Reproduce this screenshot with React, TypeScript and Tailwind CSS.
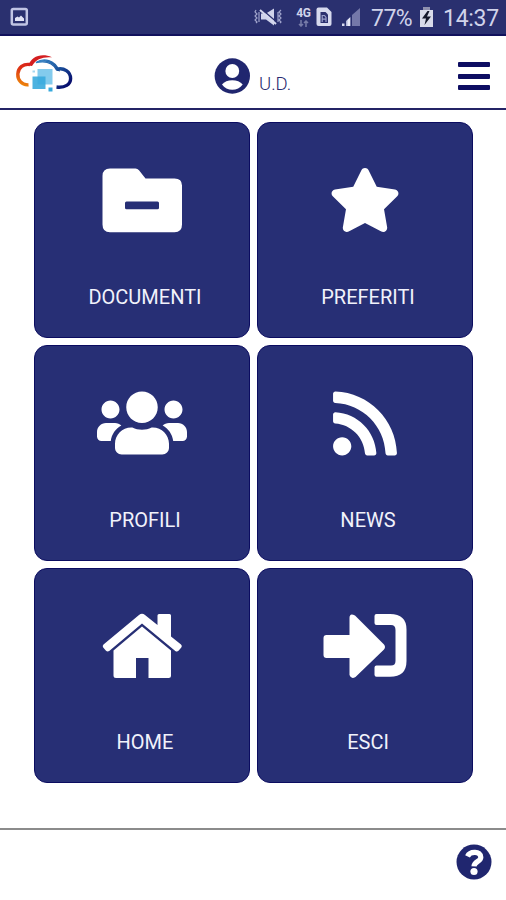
import type { ReactNode } from 'react';
import { FaRss, FaStar, FaUsers } from 'react-icons/fa';

function PictureIcon() {
  return (
    <svg className="ml-[10px] h-5 w-[19px]" viewBox="0 0 19 20" fill="none">
      <rect x="1.800" y="2" width="15" height="15.500" rx="1.500" stroke="#c0c4e4" strokeWidth="2.500" />
      <path d="M5 14v-3l2.500-1.500 1.500 1 2-2 3 3V14z" fill="#dfe1f4" />
    </svg>
  );
}

function MutedIcon() {
  return (
    <svg className="h-5 w-7" viewBox="0 0 28 20" fill="none">
      <path d="M2 3l-1 2 2 2-2 2 2 2-2 2 2 2-1 1M5 5v10M24 5v10M27 3l-2 2 2 2-2 2 2 2-2 2 2 2-1 1" stroke="#9fa3cb" strokeWidth="1.200" />
      <path d="M7 6.500h5l8-5v17l-8-6H7z" fill="#d0d3eb" />
      <path d="M7.500 2l15 13" stroke="#2b306f" strokeWidth="1.500" />
      <path d="M6 3l16 14" stroke="#d5d8ee" strokeWidth="2" />
    </svg>
  );
}

function NetworkIcon() {
  return (
    <div className="ml-[13px] flex w-[17px] flex-col items-center">
      <span className="text-[12px] leading-[11px] font-bold tracking-[-0.2px]">4G</span>
      <svg className="mt-px h-[7px] w-[11px]" viewBox="0 0 11 7" fill="none" stroke="#777ca9" strokeWidth="1.500">
        <path d="M3 0v6M1 4l2 2 2-2M8 7V1M6 3l2-2 2 2" />
      </svg>
    </div>
  );
}

function SimIcon() {
  return (
    <svg className="ml-[4px] h-5 w-4" viewBox="0 0 16 20">
      <path d="M2.500 .500h8.500l4.500 4.500v12q0 2-2 2H2.500q-2 0-2-2v-14.500q0-2 2-2z" fill="#d7daee" />
      <path d="M4.500 5h5l2.500 2.500V16H4.500z" fill="#2b306f" />
      <path d="M6.200 15V8.500h2.300l1.500 2V15M6 12.200h4" fill="none" stroke="#9a9fcb" strokeWidth="1.200" />
    </svg>
  );
}

function SignalIcon() {
  return (
    <svg className="ml-[9px] h-5 w-5" viewBox="0 0 20 20">
      <path d="M11 8l8-7v18h-8z" fill="#7478a9" />
      <path d="M1 16.500h2.500V19H1z" fill="#d7daee" />
      <path d="M5 14l4.500-4v9H5z" fill="#b3b7d8" />
      <path d="M6.500 13l2.500-2.500V19H6.500z" fill="#e8e9f6" />
    </svg>
  );
}

function BatteryIcon() {
  return (
    <svg className="ml-[6px] h-[21px] w-[15px]" viewBox="0 0 15 21">
      <path d="M4 0h7v3H4z" fill="#8f91ae" />
      <path d="M1 3h13v17H1z" fill="#d9dbea" />
      <path d="M8.500 4L3 11.500h4L5.500 18 12 9.500H8L10.500 4z" fill="#15182b" />
    </svg>
  );
}

function StatusBar() {
  return (
    <div className="flex h-9 w-full items-center border-b-2 border-[#11115c] bg-[#2a306f] text-[#d0d3ea]">
      <PictureIcon />
      <div className="mr-px ml-auto flex items-center">
        <MutedIcon />
        <NetworkIcon />
        <SimIcon />
        <SignalIcon />
        <span className="ml-[10px] w-[42px] pt-[3px] text-[23px] leading-6 tracking-[-0.5px] whitespace-nowrap">77%</span>
        <BatteryIcon />
        <span className="ml-[9px] w-[62px] pt-[3px] text-[23px] leading-6 tracking-[-0.3px] whitespace-nowrap">14:37</span>
      </div>
    </div>
  );
}

function CloudLogo() {
  return (
    <svg className="h-[42px] w-[60px]" viewBox="14 52 60 42" fill="none">
      <defs>
        <linearGradient id="warm" gradientUnits="userSpaceOnUse" x1="24" y1="87" x2="34" y2="56">
          <stop stopColor="#ee8a0a" />
          <stop offset=".55" stopColor="#dc2c16" />
          <stop offset="1" stopColor="#d41820" />
        </linearGradient>
        <linearGradient id="cool" gradientUnits="userSpaceOnUse" x1="40" y1="60" x2="68" y2="88">
          <stop stopColor="#3180c2" />
          <stop offset=".5" stopColor="#19509a" />
          <stop offset="1" stopColor="#060668" />
        </linearGradient>
      </defs>
      <path d="M28.500 84.800C22 85.500 17.500 80 17.800 74C18.200 67.500 23.500 63.500 30 64.500" stroke="url(#warm)" strokeWidth="3.400" />
      <path d="M28.500 65.500C31 57 41 52.500 52 57.300C43 56.500 36 59 32 66Z" fill="#d41e20" />
      <path d="M36 62.500C44 57.500 54.500 60 59 70.500L56.500 70C53 62.500 46 60.500 36 62.500Z" fill="url(#cool)" stroke="url(#cool)" strokeWidth="1.300" />
      <path d="M56.500 69.300C64 67 70.600 72 70.600 78.500C70.600 84.500 65 88 56.500 87" stroke="url(#cool)" strokeWidth="3.400" />
      <path d="M37.500 69H52.500V84.500H37.500z" fill="#83cbed" />
      <path d="M32.500 76.500H45.500V89H32.500z" fill="#38aadd" fillOpacity=".9" />
      <path d="M48.500 87.500H52.500V91.500H48.500z" fill="#36a9dc" />
      <path d="M32.500 70.500h2.500v2h-2.500z" fill="#a5d7ee" />
    </svg>
  );
}

function Header() {
  return (
    <header className="flex h-[74px] w-full items-start border-b-2 border-[#242466] bg-white">
      <div className="mt-4 ml-[14px] w-[200px]">
        <CloudLogo />
      </div>
      <svg className="mt-[22px] h-9 w-9" viewBox="0 0 36 36">
        <circle cx="18.300" cy="18" r="17.700" fill="#20266f" />
        <circle cx="18.300" cy="13" r="6.900" fill="#fff" />
        <path d="M8 26.500C12 20.800 24.500 20.800 28.700 26.500C24 33.500 12.500 33.500 8 26.500Z" fill="#fff" />
      </svg>
      <span className="mt-[36px] ml-[9px] text-[18.5px] leading-6 font-light text-[#272a70]">U.D.</span>
      <div className="mt-[26px] mr-4 ml-auto flex w-8 flex-col gap-[6.5px]">
        <span className="h-[5px] rounded-[1px] bg-[#0d0d62]" />
        <span className="h-[5px] rounded-[1px] bg-[#0d0d62]" />
        <span className="h-[5px] rounded-[1px] bg-[#0d0d62]" />
      </div>
    </header>
  );
}

function FolderIcon() {
  return (
    <svg className="h-[72px] w-24" viewBox="60 42 96 72">
      <path d="M76 46.500H101.500Q103.500 46.500 105 48.300L111.500 56.500H140.500Q148 56.500 148 63.500V102.500Q148 110.300 140.500 110.300H76Q68.500 110.300 68.500 102.500V54Q68.500 46.500 76 46.500Z" fill="#fff" />
      <rect x="91" y="79.500" width="34" height="7.800" rx="1.500" fill="#272f75" />
    </svg>
  );
}

function HouseIcon() {
  return (
    <svg className="h-[72px] w-24" viewBox="60 42 96 72" fill="#fff">
      <path d="M105 47Q108 44.700 111 47L123.500 57V47.500Q123.500 46 125 46H135.500Q137 46 137 47.500V68.500L147 76.500Q148.600 78 147.300 79.500L144.500 82.800Q143 84.300 141.300 83L108 55.500L75.500 82.800Q73.500 84.300 72 82.800L69.200 79.500Q68 78 69.500 76.500Z" />
      <path d="M108 58.500L137 82.500V107.500Q137 110 134.500 110H114.500V90H102V110H82Q79.500 110 79.500 107.500V82.500Z" />
    </svg>
  );
}

function ExitIcon() {
  return (
    <svg className="h-[72px] w-24" viewBox="60 42 96 72" fill="#fff">
      <path d="M69.500 67H92.500V50Q92.500 44.500 98 47.500L127 76.500Q129 79 127 81.500L98.500 109Q94 111.500 92.500 107V90H69.500Q66.500 90 66.500 87V70Q66.500 67 69.500 67Z" />
      <path d="M119.500 46H133Q149.500 46 149.500 61.500V93Q149.500 108.800 133 108.800H119.500Q117.500 108.800 117.500 106.800V99.500Q117.500 97.500 119.500 97.500H134Q138.500 97.500 138.500 93V62Q138.500 57 134 57H119.500Q117.500 57 117.500 55V48Q117.500 46 119.500 46Z" />
    </svg>
  );
}

function HelpIcon() {
  return (
    <svg className="h-9 w-9" viewBox="0 0 36 36" fill="none">
      <circle cx="18" cy="18" r="17.500" fill="#20266f" />
      <path d="M11.500 12.300C14 6.800 24.800 6.800 24.800 13.300C24.800 17.800 18.300 17.300 18 22.300" stroke="#fff" strokeWidth="5.200" />
      <circle cx="18" cy="27.500" r="3.600" fill="#fff" />
    </svg>
  );
}

function Tile({ label, children }: { label: string; children: ReactNode }) {
  return (
    <button className="flex flex-col items-center justify-between rounded-[13px] border border-[#0b0c60] bg-[#272f75] pt-[41px] pb-[28px] text-white">
      <span className="flex h-[72px] w-24 items-center justify-center">{children}</span>
      <span className="pl-[6px] text-[20px] leading-6 text-[#f1f2fb]">{label}</span>
    </button>
  );
}

export default function App() {
  return (
    <div className="flex h-[900px] w-[506px] flex-col overflow-hidden bg-white font-[Roboto,sans-serif]">
      <StatusBar />
      <Header />
      <main className="grid h-[718px] grid-cols-[216px_216px] grid-rows-[216px_216px_215px] content-start gap-[7px] pt-3 pl-[34px]">
        <Tile label="DOCUMENTI">
          <FolderIcon />
        </Tile>
        <Tile label="PREFERITI">
          <FaStar className="h-[64px] w-[72px]" />
        </Tile>
        <Tile label="PROFILI">
          <FaUsers className="h-[72px] w-[90px] shrink-0" />
        </Tile>
        <Tile label="NEWS">
          <FaRss className="h-[73px] w-16" />
        </Tile>
        <Tile label="HOME">
          <HouseIcon />
        </Tile>
        <Tile label="ESCI">
          <ExitIcon />
        </Tile>
      </main>
      <footer className="flex grow items-start justify-end border-t-2 border-[#8b8b8b] pt-[14px] pr-[14px]">
        <HelpIcon />
      </footer>
    </div>
  );
}
